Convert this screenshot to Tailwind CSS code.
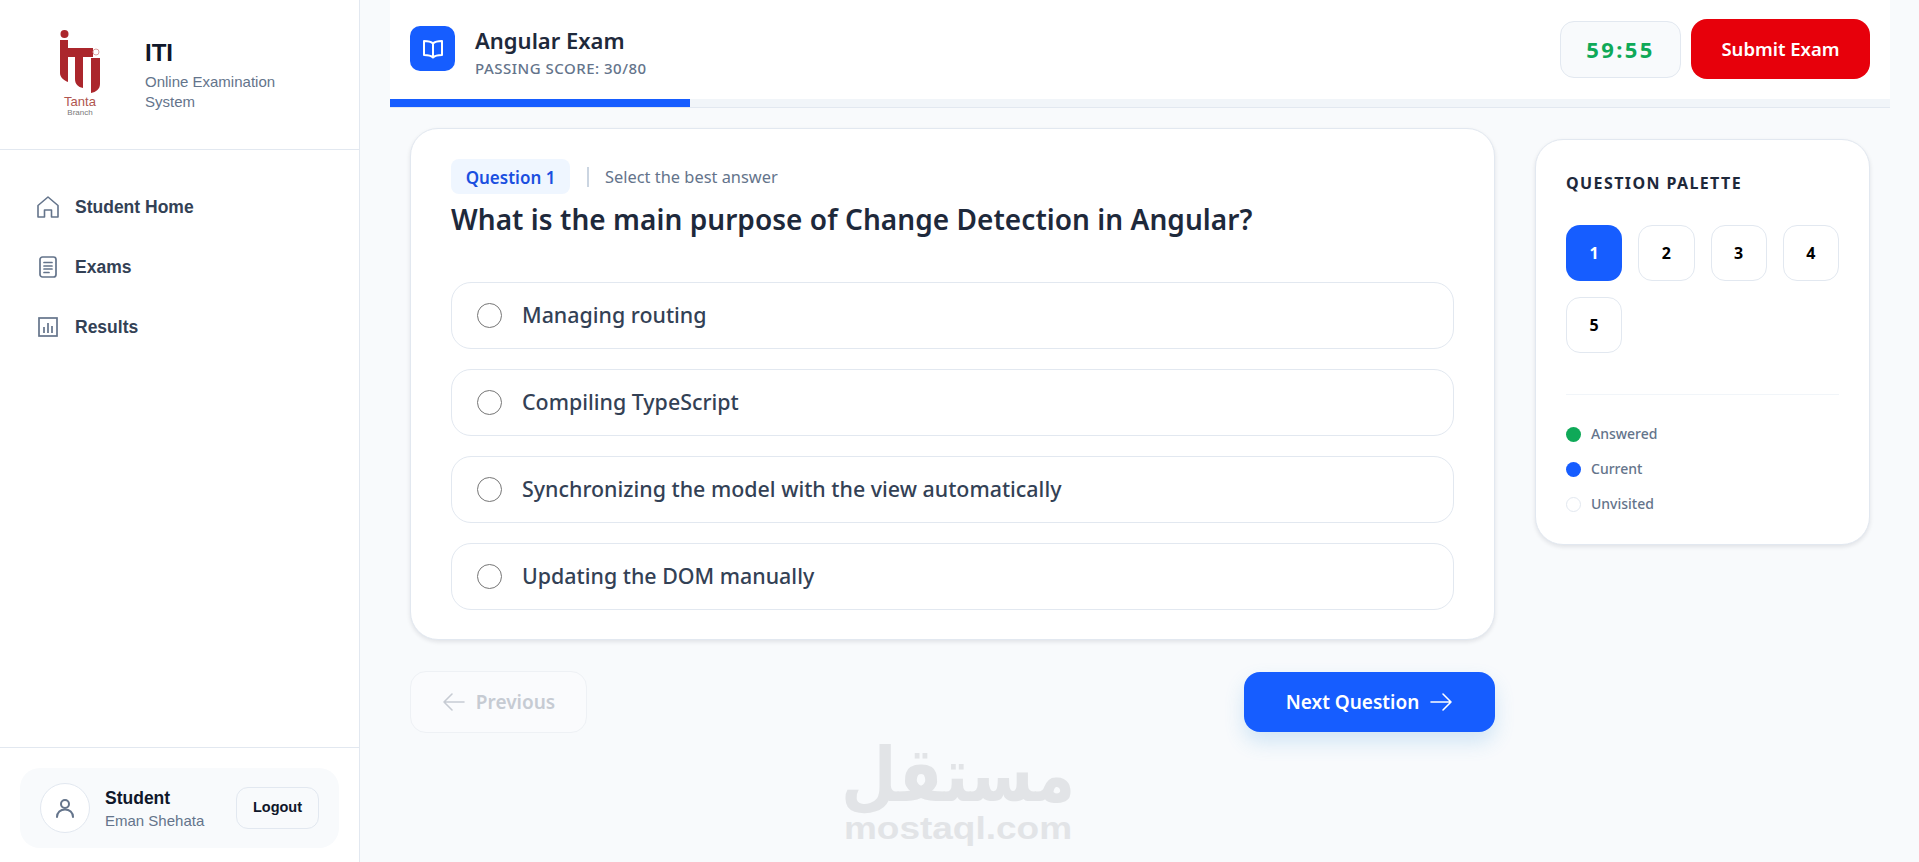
<!DOCTYPE html>
<html lang="en">
<head>
  <meta charset="UTF-8" />
  <title>ITI - Online Examination System</title>
  <script src="https://cdn.jsdelivr.net/npm/@tailwindcss/browser@4"></script>
</head>
<body class="bg-[#f8fafc] font-['Noto_Sans',sans-serif] overflow-hidden">
<div class="flex h-[862px] relative">

  <!-- Sidebar -->
  <aside class="w-[360px] shrink-0 h-full bg-white border-r border-[#e2e8f0] flex flex-col font-['Liberation_Sans',sans-serif]">
    <div class="h-[150px] border-b border-[#e2e8f0] flex items-center pl-[45px] gap-[30px]">
      <div class="w-[70px] h-[100px] shrink-0 flex flex-col items-center">
        <svg width="70" height="74" viewBox="45 25 70 74" class="block">
          <circle cx="64.500" cy="34" r="4" fill="#ab262c"/>
          <path d="M60 40H68V48H93V57H83V88C78 87 75 84 75 79V57H68V82C63 80 60 77 60 73Z" fill="#ab262c"/>
          <path d="M91 58H100V84C100 89 96 92 91 93Z" fill="#ab262c"/>
          <circle cx="96" cy="52" r="3" fill="#fff" stroke="#d9a0a0"/>
        </svg>
        <span class="text-[13px] leading-[13px] text-[#b0554e] mt-[-4px]">Tanta</span>
        <span class="text-[8px] leading-[10px] text-[#7a7a7a]">Branch</span>
      </div>
      <div class="mt-[2px]">
        <div class="text-[24px] leading-[28px] font-bold text-[#0f172a]">ITI</div>
        <div class="text-[15px] leading-[20px] text-[#64748b] mt-[5px] w-[150px]">Online Examination System</div>
      </div>
    </div>

    <nav class="flex-1 pt-[27px] pl-[36px] flex flex-col">
      <a class="h-[60px] flex items-center gap-[15px] text-[17.500px] font-bold text-[#334155]">
        <svg class="w-6 h-6 text-[#64748b]" viewBox="0 0 24 24" fill="none" stroke="currentColor" stroke-width="1.600" stroke-linejoin="round"><path d="M2 10.500 12 2l10 8.500V22h-6.500v-7h-7v7H2z"/></svg>
        Student Home
      </a>
      <a class="h-[60px] flex items-center gap-[15px] text-[17.500px] font-bold text-[#334155]">
        <svg class="w-6 h-6 text-[#64748b]" viewBox="0 0 24 24" fill="none" stroke="currentColor" stroke-width="1.700" stroke-linecap="round"><rect x="4" y="2" width="16" height="20" rx="2.500"/><path d="M8 7.500h8M8 11h8M8 14h8M8 17.500h5"/></svg>
        Exams
      </a>
      <a class="h-[60px] flex items-center gap-[15px] text-[17.500px] font-bold text-[#334155]">
        <svg class="w-6 h-6 text-[#64748b]" viewBox="0 0 24 24" fill="none" stroke="currentColor" stroke-width="1.700"><rect x="3" y="3" width="18" height="18"/><path d="M8 12v6M12 8v10M16 11v7"/></svg>
        Results
      </a>
    </nav>

    <div class="h-[115px] border-t border-[#e2e8f0] px-[20px] pt-[20px]">
      <div class="h-[80px] rounded-[20px] bg-[#f8fafc] flex items-center px-[20px]">
        <div class="w-[50px] h-[50px] rounded-full bg-white border border-[#e2e8f0] flex items-center justify-center shrink-0">
          <svg class="w-6 h-6 text-[#64748b]" viewBox="0 0 24 24" fill="none" stroke="currentColor" stroke-width="2" stroke-linecap="round"><circle cx="12" cy="8" r="4"/><path d="M4 21c0-4.500 3.500-7.500 8-7.500s8 3 8 7.500"/></svg>
        </div>
        <div class="ml-[15px] flex-1 mt-[2px]">
          <div class="text-[17.500px] leading-[21px] font-bold text-[#0f172a]">Student</div>
          <div class="text-[15px] leading-[20px] text-[#64748b] mt-[2px]">Eman Shehata</div>
        </div>
        <button class="w-[83px] h-[42px] rounded-[12px] border border-[#e2e8f0] bg-[#f8fafc] text-[14.500px] font-bold text-[#0f172a]">Logout</button>
      </div>
    </div>
  </aside>

  <!-- Main -->
  <main class="flex-1 min-w-0">
    <div class="w-[1500px] ml-[30px]">
      <header class="h-[99px] bg-white flex items-center justify-between px-[20px]">
        <div class="flex items-center gap-[20px] mb-[2px]">
          <div class="w-[45px] h-[45px] rounded-[10px] bg-[#165dff] flex items-center justify-center">
            <svg class="w-6 h-6 text-white" viewBox="0 0 24 24" fill="none" stroke="currentColor" stroke-width="2" stroke-linejoin="round"><path d="M12 6.500C10 4.500 7 4 3 4v14c4 0 7 .5 9 2.500 2-2 5-2.500 9-2.500V4c-4 0-7 .5-9 2.500zM12 6.500v14"/></svg>
          </div>
          <div class="mt-[7px]">
            <div class="text-[22px] leading-[28px] font-semibold text-[#1e293b]">Angular Exam</div>
            <div class="text-[15px] leading-[20px] font-medium text-[#64748b] tracking-[0.5px] mt-[4px]">PASSING SCORE: 30/80</div>
          </div>
        </div>
        <div class="flex items-center gap-[10px] mb-[1px]">
          <div class="w-[121px] h-[57px] mt-[1px] rounded-[14px] border border-[#e2e8f0] bg-[#f8fafc] flex items-center justify-center text-[22px] font-bold text-[#0fa958] tracking-[2.400px]">59:55</div>
          <button class="w-[179px] h-[60px] rounded-[16px] bg-[#e7000b] text-white text-[18.500px] font-semibold">Submit Exam</button>
        </div>
      </header>
      <div class="h-[9px] bg-[#f1f5f9] border-b border-[#e2e8f0]">
        <div class="h-[8px] w-[300px] bg-[#165dff]"></div>
      </div>

      <div class="flex gap-[40px] px-[20px] pt-[20px]">
        <div class="flex-1 min-w-0">
          <section class="h-[512px] rounded-[28px] bg-white border border-[#e2e8f0] shadow-[0_2px_4px_rgba(15,23,42,0.1)] px-[40px] pt-[30px]">
            <div class="flex items-center">
              <span class="w-[119px] h-[35px] pt-[2px] rounded-[8px] bg-[#eff6ff] flex items-center justify-center text-[17px] font-semibold text-[#1a4fe0]">Question 1</span>
              <span class="w-[2px] h-[20px] bg-[#cbd5e1] ml-[17px]"></span>
              <span class="ml-[16px] pt-[2px] text-[16.400px] text-[#64748b]">Select the best answer</span>
            </div>
            <h2 class="text-[28px] leading-[40px] font-semibold text-[#1e293b] mt-[5px] tracking-[0.05px]">What is the main purpose of Change Detection in Angular?</h2>
            <div class="mt-[43px] flex flex-col gap-[20px]">
              <label class="h-[67px] rounded-[20px] border border-[#e2e8f0] flex items-center pl-[25px] gap-[20px] text-[21.400px] font-medium text-[#334155]"><span class="w-[25px] h-[25px] rounded-full border border-[#767676]"></span>Managing routing</label>
              <label class="h-[67px] rounded-[20px] border border-[#e2e8f0] flex items-center pl-[25px] gap-[20px] text-[21.400px] font-medium text-[#334155]"><span class="w-[25px] h-[25px] rounded-full border border-[#767676]"></span>Compiling TypeScript</label>
              <label class="h-[67px] rounded-[20px] border border-[#e2e8f0] flex items-center pl-[25px] gap-[20px] text-[21.400px] font-medium text-[#334155]"><span class="w-[25px] h-[25px] rounded-full border border-[#767676]"></span>Synchronizing the model with the view automatically</label>
              <label class="h-[67px] rounded-[20px] border border-[#e2e8f0] flex items-center pl-[25px] gap-[20px] text-[21.400px] font-medium text-[#334155]"><span class="w-[25px] h-[25px] rounded-full border border-[#767676]"></span>Updating the DOM manually</label>
            </div>
          </section>

          <div class="flex items-center justify-between mt-[31px]">
            <button class="w-[177px] h-[62px] rounded-[16px] border border-[#eef1f5] bg-[#fafbfd] flex items-center justify-center gap-[10px] text-[19px] font-semibold text-[#c6cbd3]">
              <svg class="w-6 h-6" viewBox="0 0 24 24" fill="none" stroke="currentColor" stroke-width="1.600" stroke-linecap="round" stroke-linejoin="round"><path d="M22 12H2M10 4l-8 8 8 8"/></svg>
              Previous
            </button>
            <button class="w-[251px] h-[60px] rounded-[16px] bg-[#165dff] flex items-center justify-center gap-[10px] text-[19px] font-semibold text-white shadow-[0_10px_20px_rgba(56,150,220,0.2)]">
              Next Question
              <svg class="w-6 h-6" viewBox="0 0 24 24" fill="none" stroke="currentColor" stroke-width="1.600" stroke-linecap="round" stroke-linejoin="round"><path d="M2 12h20M14 4l8 8-8 8"/></svg>
            </button>
          </div>
        </div>

        <aside class="w-[335px] h-[406px] shrink-0 mt-[11px] rounded-[28px] bg-white border border-[#e2e8f0] shadow-[0_2px_4px_rgba(15,23,42,0.1)] px-[30px] pt-[30px]">
          <h3 class="text-[16px] leading-[26px] font-bold tracking-[1.400px] text-[#1e293b]">QUESTION PALETTE</h3>
          <div class="grid grid-cols-4 gap-[16px] mt-[29px]">
            <button class="h-[56px] rounded-[14px] bg-[#165dff] text-white text-[16px] font-bold">1</button>
            <button class="h-[56px] rounded-[14px] border border-[#e2e8f0] bg-white text-black text-[16px] font-bold">2</button>
            <button class="h-[56px] rounded-[14px] border border-[#e2e8f0] bg-white text-black text-[16px] font-bold">3</button>
            <button class="h-[56px] rounded-[14px] border border-[#e2e8f0] bg-white text-black text-[16px] font-bold">4</button>
            <button class="h-[56px] rounded-[14px] border border-[#e2e8f0] bg-white text-black text-[16px] font-bold">5</button>
          </div>
          <div class="border-t border-[#f1f5f9] mt-[41px] pt-[29px] flex flex-col gap-[15px] text-[14px] leading-[20px] font-medium text-[#64748b]">
            <div class="flex items-center gap-[10px]"><span class="w-[15px] h-[15px] rounded-full bg-[#0fa958]"></span>Answered</div>
            <div class="flex items-center gap-[10px]"><span class="w-[15px] h-[15px] rounded-full bg-[#165dff]"></span>Current</div>
            <div class="flex items-center gap-[10px]"><span class="w-[15px] h-[15px] rounded-full border border-[#e2e8f0]"></span>Unvisited</div>
          </div>
        </aside>
      </div>
    </div>
  </main>

  <!-- Watermark -->
  <div class="absolute left-[845px] top-[747px] w-[226px] flex flex-col items-center text-[#e2e4e7] font-bold pointer-events-none">
    <span class="block h-[56px] font-['DejaVu_Sans',sans-serif] text-[64px] leading-[56px] scale-y-[1.180]" dir="rtl">مستقل</span>
    <span class="block h-[40px] mt-[6px] font-['Liberation_Sans',sans-serif] text-[37px] leading-[40px] scale-y-[0.850]">mostaql.com</span>
  </div>
</div>
</body>
</html>
